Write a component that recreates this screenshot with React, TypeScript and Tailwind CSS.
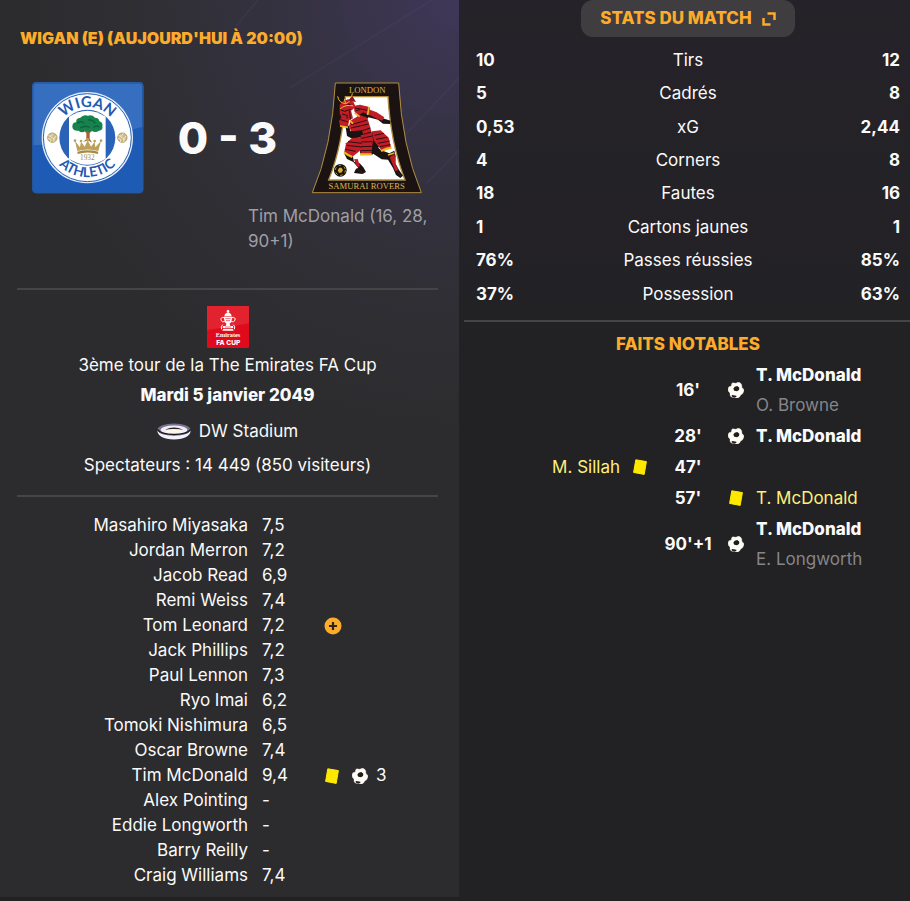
import type { ReactNode } from 'react'

type IconKind = 'card' | 'ball' | 'plus'

interface Player {
  name: string
  rating: string
  icons?: IconKind[]
  goals?: number
}

interface MatchEvent {
  minute: string
  side: 'home' | 'away'
  kind: 'goal' | 'yellow'
  player: string
  assist?: string
}

const stats = [
  { label: 'Tirs', home: '10', away: '12' },
  { label: 'Cadrés', home: '5', away: '8' },
  { label: 'xG', home: '0,53', away: '2,44' },
  { label: 'Corners', home: '4', away: '8' },
  { label: 'Fautes', home: '18', away: '16' },
  { label: 'Cartons jaunes', home: '1', away: '1' },
  { label: 'Passes réussies', home: '76%', away: '85%' },
  { label: 'Possession', home: '37%', away: '63%' },
]

const players: Player[] = [
  { name: 'Masahiro Miyasaka', rating: '7,5' },
  { name: 'Jordan Merron', rating: '7,2' },
  { name: 'Jacob Read', rating: '6,9' },
  { name: 'Remi Weiss', rating: '7,4' },
  { name: 'Tom Leonard', rating: '7,2', icons: ['plus'] },
  { name: 'Jack Phillips', rating: '7,2' },
  { name: 'Paul Lennon', rating: '7,3' },
  { name: 'Ryo Imai', rating: '6,2' },
  { name: 'Tomoki Nishimura', rating: '6,5' },
  { name: 'Oscar Browne', rating: '7,4' },
  { name: 'Tim McDonald', rating: '9,4', icons: ['card', 'ball'], goals: 3 },
  { name: 'Alex Pointing', rating: '-' },
  { name: 'Eddie Longworth', rating: '-' },
  { name: 'Barry Reilly', rating: '-' },
  { name: 'Craig Williams', rating: '7,4' },
]

const events: MatchEvent[] = [
  { minute: "16'", side: 'away', kind: 'goal', player: 'T. McDonald', assist: 'O. Browne' },
  { minute: "28'", side: 'away', kind: 'goal', player: 'T. McDonald' },
  { minute: "47'", side: 'home', kind: 'yellow', player: 'M. Sillah' },
  { minute: "57'", side: 'away', kind: 'yellow', player: 'T. McDonald' },
  { minute: "90'+1", side: 'away', kind: 'goal', player: 'T. McDonald', assist: 'E. Longworth' },
]

function YellowCard() {
  return (
    <svg viewBox="0 0 16 16" className="h-4 w-4 shrink-0">
      <path d="M3.8 0.8 L14.4 2.6 L12.2 15.4 L1.6 13.4 Z" fill="#ffe800" stroke="#ffe800" strokeWidth="1" strokeLinejoin="round" />
    </svg>
  )
}

function Ball() {
  return (
    <svg viewBox="0 0 48 48" className="h-4 w-4 shrink-0">
      <path
        d="M11 5 Q14 1 18 3 L24 4 Q29 0 33 1 Q39 3 41 8 L42 17 Q48 20 48 25 Q47 32 43 36 L38 39 Q36 45 31 47 Q25 49 20 46 L12 46 Q6 43 6 39 L6 33 Q0 29 0 23 Q0 17 3 14 L10 12 Z"
        fill="#fffdf3"
        stroke="#fffdf3"
        strokeWidth="1"
      />
      <path d="M20 14 L28 12 L34 17 L33 24 L27 28 L19 26 L16 20 Z" fill="#1d1c1f" />
      <path d="M11 39 L17 40 L25 41 L25 45 L18 46 L12 44 Z" fill="#1d1c1f" />
    </svg>
  )
}

function Plus() {
  return (
    <svg viewBox="0 0 18 18" className="h-[18px] w-[18px] shrink-0">
      <circle cx="9" cy="9" r="8.5" fill="#fcab2b" />
      <path d="M9 5 V13 M5 9 H13" stroke="#29261f" strokeWidth="2.2" />
    </svg>
  )
}

const icons: Record<IconKind, ReactNode> = {
  card: <YellowCard />,
  ball: <Ball />,
  plus: <Plus />,
}

function PanelBall({ x, y }: { x: number; y: number }) {
  return (
    <g transform={`translate(${x} ${y})`} fill="none" stroke="#b39a5c" strokeWidth="3">
      <circle r="14" fill="#cdbb8a" />
      <path d="M-12 -6 Q0 -2 2 -13 M-5 13 Q-4 0 -13 3 M12 -4 Q2 -1 5 13 M-6 -4 L6 5" stroke="#fff" strokeWidth="2" />
    </g>
  )
}

function WiganCrest() {
  return (
    <svg viewBox="36 36 336 336" className="h-28 w-28 shrink-0" role="img" aria-label="Wigan Athletic">
      <defs>
        <path id="wigan-top" d="M110 203 A92 92 0 0 1 294 203" />
        <path id="wigan-bottom" d="M84 203 A118 118 0 0 0 320 203" />
      </defs>
      <rect x="37" y="37" width="333" height="333" rx="12" fill="#1e5bb5" />
      <path d="M37 226 V49 Q37 37 49 37 H358 Q370 37 370 49 V170 Q290 190 210 207 Q120 222 37 226 Z" fill="#376fc0" />
      <rect x="39" y="39" width="329" height="329" rx="11" fill="none" stroke="#2459a5" strokeWidth="4" />
      <circle cx="202" cy="203" r="137" fill="#e8effa" />
      <circle cx="202" cy="203" r="132" fill="none" stroke="#2a62b8" strokeWidth="3" />
      <circle cx="202" cy="203" r="129" fill="#fff" />
      <circle cx="202" cy="203" r="84" fill="#2a62b8" />
      <path d="M147 140 Q202 104 257 140 V266 Q202 302 147 266 Z" fill="#fff" />
      <path
        d="M157 171 Q156 157 169 157 Q166 145 181 143 Q190 132 204 137 Q216 133 225 143 Q238 144 238 154 Q250 158 247 169 Q250 181 237 182 Q226 190 216 183 Q206 190 196 184 Q184 190 176 182 Q159 184 157 171 Z"
        fill="#16824d"
      />
      <path d="M171 160 Q184 150 193 160 M204 150 Q217 147 226 160 M181 174 Q194 165 209 172 M220 172 Q230 165 239 171" stroke="#0c6238" strokeWidth="4" fill="none" />
      <path d="M191 180 L199 190 V207 L190 216 L204 211 L216 218 L209 206 V190 L218 180 L205 186 Z" fill="#a0633a" />
      <path
        d="M165 213 L180 232 L183 215 L194 230 L203 211 L213 230 L224 215 L226 232 L243 213 L235 243 Q203 234 172 243 Z"
        fill="#bda15a"
      />
      <path d="M172 245 Q203 237 235 245 L234 252 Q203 243 173 252 Z" fill="#a98a42" />
      <g fill="#bda15a">
        <circle cx="165" cy="212" r="4" />
        <circle cx="183" cy="213" r="4" />
        <circle cx="203" cy="209" r="5" />
        <circle cx="224" cy="213" r="4" />
        <circle cx="243" cy="212" r="4" />
      </g>
      <text x="202" y="269" textAnchor="middle" fontSize="22" fill="#a98a42" fontFamily="'Liberation Serif', serif">1932</text>
      <PanelBall x={97} y={203} />
      <PanelBall x={307} y={203} />
      <g fill="#1f5ab4" fontFamily="Lato, sans-serif" fontWeight="700" textAnchor="middle">
        <text fontSize="45">
          <textPath href="#wigan-top" startOffset="50%">WIGAN</textPath>
        </text>
        <text fontSize="41">
          <textPath href="#wigan-bottom" startOffset="50%">ATHLETIC</textPath>
        </text>
      </g>
    </svg>
  )
}

function SamuraiCrest() {
  return (
    <svg viewBox="31 36 336 336" className="h-28 w-28 shrink-0" role="img" aria-label="London Samurai Rovers">
      <path d="M104 39 H294 Q304 230 362 368 H35 Q94 230 104 39 Z" fill="#1b1311" stroke="#b08d3c" strokeWidth="3" />
      <path d="M134 80 H262 Q270 220 313 330 H84 Q128 220 134 80 Z" fill="#fff" stroke="#b08d3c" strokeWidth="4" />
      <g fill="#dcb355" fontFamily="'Liberation Serif', serif" textAnchor="middle">
        <text x="200" y="68" fontSize="26">LONDON</text>
        <text x="198" y="358" fontSize="26">SAMURAI ROVERS</text>
      </g>

      {/* limbs */}
      <g fill="#1b1311">
        <path d="M188 108 L208 113 L204 132 L218 137 L246 145 L270 152 L268 162 L247 161 L232 149 L204 142 L186 160 L160 160 Z" />
        <path d="M134 165 L146 168 L149 184 L170 177 L187 170 L193 178 L189 206 L178 202 L158 208 L139 198 Z" />
        <path d="M136 245 L156 256 L160 275 L177 280 L188 292 L196 306 L185 312 L160 309 L165 298 L173 293 L158 276 L139 267 L130 250 Z" />
        <path d="M213 215 L240 240 L266 250 L281 242 L285 258 L284 280 L295 300 L307 317 L299 324 L286 315 L277 294 L262 269 L243 268 L214 249 Z" />
        <path d="M177 196 L216 186 L235 230 L215 254 L178 250 Z" />
      </g>
      <g fill="#c21d27">
        <path d="M204 118 L228 127 L251 142 L244 152 L229 146 L201 132 Z" />
        <path d="M160 268 L171 267 L178 289 L170 292 Z" />
        <path d="M267 261 L282 253 L285 283 L293 300 L284 304 Z" />
        {/* helmet and mask */}
        <path d="M117 105 L127 92 L143 88 L158 95 L164 108 L158 117 L151 122 L157 145 L145 151 L142 171 L118 167 L115 153 L122 142 L117 130 Z" />
        {/* shoulder and chest */}
        <path d="M158 108 L178 104 L206 111 L202 134 L188 127 L174 136 L162 127 Z" />
        <path d="M151 151 L178 135 L200 143 L205 160 L213 187 L192 206 L184 181 L151 184 L145 168 Z" />
        {/* skirt plates */}
        <path d="M153 205 L181 202 L186 236 L155 260 L131 246 L136 220 Z" />
        <path d="M180 196 L214 188 L217 208 L212 253 L180 252 Z" />
        <path d="M214 184 L240 181 L264 203 L272 235 L242 241 L219 211 Z" />
      </g>
      <g stroke="#2a0f10" strokeWidth="3" fill="none">
        <path d="M119 119 L132 124 L150 118 M124 132 L140 136 L139 146 M119 149 L143 156 M129 100 L150 104 M147 122 L149 149" />
        <path d="M163 114 L201 121 M165 122 L178 119" />
        <path d="M151 164 L198 151 M151 174 L204 162 M185 182 L209 174 M189 193 L211 186 M182 205 L215 198" />
        <path d="M142 215 L183 220 M138 226 L184 231 M134 238 L165 244 M182 216 L214 215 M182 230 L214 229 M180 242 L213 241" />
        <path d="M221 196 L250 190 M226 208 L260 202 M232 220 L267 213 M238 230 L269 224" />
      </g>
      {/* gold trims */}
      <g fill="none" stroke="#e8ba20" strokeWidth="5">
        <path d="M111 79 Q114 99 135 101 Q151 98 155 70 M135 101 L131 87" strokeWidth="3" />
        <path d="M118 117 Q134 102 158 108" strokeWidth="3" />
        <path d="M205 111 L201 135 M162 129 L177 140 M118 168 L142 172 M148 151 L157 161" />
        <path d="M130 247 Q141 255 155 261 M178 253 H213 M241 243 Q257 235 272 233" strokeWidth="7" />
        <path d="M262 255 L281 249" />
      </g>
      <path d="M142 92 L166 96 L155 78 Z" fill="#8d1820" />
      <path d="M167 296 L189 309 M288 302 L302 320" stroke="#4d2020" strokeWidth="2" />

      <circle cx="119" cy="301" r="19" fill="#17120c" />
      <path d="M116 293 H123 L127 301 L122 308 H115 L111 301 Z" fill="#dcb02b" />
      <circle cx="119" cy="301" r="15" fill="none" stroke="#dcb02b" strokeWidth="3" strokeDasharray="7 9" />
    </svg>
  )
}

function FaCupLogo() {
  return (
    <svg viewBox="0 0 126 126" className="h-[42px] w-[42px]" role="img" aria-label="Emirates FA Cup">
      <rect width="126" height="126" rx="4" fill="#e00a1d" />
      <path d="M0 0 H126 V52 Q60 66 0 72 Z" fill="#e3222f" />
      <g fill="#fff">
        <path d="M60 20 Q57 13 63 11 Q69 13 66 20 Z" />
        <path d="M54 24 Q63 16 72 24 L74 31 H52 Z" />
        <path d="M50 32 H76 L73 48 Q68 55 63 55 Q58 55 53 48 Z" />
        <path d="M58 54 H68 L70 60 H78 L79 66 H47 L48 60 H56 Z" />
        <path d="M49 68 H77 L80 74 H46 Z" />
      </g>
      <path d="M51 35 Q40 32 42 43 Q45 49 53 47 M75 35 Q86 32 84 43 Q81 49 73 47 M47 56 Q40 62 44 70 M79 56 Q86 62 82 70" fill="none" stroke="#fff" strokeWidth="3" />
      <path d="M55 38 H71 M57 44 H69 M54 63 H72" stroke="#e3222f" strokeWidth="2" />
      <g fill="#fff" textAnchor="middle">
        <text x="63" y="92" fontSize="19" fontWeight="700" fontFamily="'Liberation Serif', serif">Emirates</text>
        <text x="64" y="116" fontSize="20" fontWeight="800" fontFamily="Inter, sans-serif">FA CUP</text>
      </g>
    </svg>
  )
}

function StadiumIcon() {
  return (
    <svg viewBox="0 0 102 50" className="h-[17px] w-[34px] shrink-0">
      <ellipse cx="51" cy="19" rx="49" ry="18" fill="#77718f" />
      <path d="M1 22 Q3 48 51 49 Q99 48 101 22 Q92 37 51 37 Q10 37 1 22 Z" fill="#f4f1ff" />
      <ellipse cx="51" cy="20" rx="40" ry="13" fill="#f1ecf5" />
      <path d="M2 19 Q10 33 51 34 Q92 33 100 19" fill="none" stroke="#15141a" strokeWidth="4" />
      <path d="M24 20 Q51 6 78 20 Q51 15 24 20 Z" fill="#28242f" />
      <ellipse cx="51" cy="24" rx="24" ry="6" fill="#fff6e4" />
    </svg>
  )
}

function ExpandIcon() {
  return (
    <svg viewBox="0 0 14 14" className="h-[14px] w-[14px]" fill="none" stroke="#fcab2b" strokeWidth="2.5">
      <path d="M5.5 1.5 H12.5 V8 M1.5 6 V12.5 H8.5" />
    </svg>
  )
}

// Faint diagonal streaks behind the score
function Streaks() {
  return (
    <svg viewBox="0 0 459 300" className="pointer-events-none absolute top-0 right-0 w-full" aria-hidden="true">
      <g stroke="#6d6690" strokeOpacity="0.1" strokeWidth="2" fill="none">
        <path d="M432 0 L290 88" />
        <path d="M459 78 L404 136" />
        <path d="M459 150 L426 184" />
        <path d="M258 0 L236 26" />
      </g>
    </svg>
  )
}

function EventName({ event }: { event: MatchEvent }) {
  if (event.kind === 'yellow') {
    return <div className="text-[#fdf07c]">{event.player}</div>
  }
  return (
    <div>
      <div className="font-extrabold">{event.player}</div>
      {event.assist && <div className="text-[#868588]">{event.assist}</div>}
    </div>
  )
}

function EventRow({ event }: { event: MatchEvent }) {
  const home = event.side === 'home'
  const icon = event.kind === 'goal' ? <Ball /> : <YellowCard />

  return (
    <li className="grid grid-cols-[1fr_40px_56px_40px_1fr] items-center leading-[30px]">
      <div className="text-right">{home && <EventName event={event} />}</div>
      <div className="flex justify-center">{home && icon}</div>
      <div className="text-center font-bold whitespace-nowrap">{event.minute}</div>
      <div className="flex justify-center">{!home && icon}</div>
      <div>{!home && <EventName event={event} />}</div>
    </li>
  )
}

function MatchPanel() {
  return (
    <section className="relative bg-[#2c2c2e] bg-[radial-gradient(circle_at_100%_0%,#3f3758_0%,#353242_160px,#302f35_300px,#2c2c2e_440px)] pt-[26px] pr-[21px] pb-[9px] pl-[17px]">
      <Streaks />
      <h1 className="pl-[3px] text-base leading-6 font-black text-[#fcab2b]">WIGAN (E) (AUJOURD'HUI À 20:00)</h1>

      <div className="mt-8 flex items-center justify-between px-[15px]">
        <WiganCrest />
        <p className="text-[44px] leading-none font-extrabold whitespace-nowrap">0 - 3</p>
        <SamuraiCrest />
      </div>
      <div className="mt-[10px] grid grid-cols-[231fr_190fr]">
        <p className="col-start-2 leading-[25px] text-[#a09fa3]">Tim McDonald (16, 28, 90+1)</p>
      </div>

      <div className="mt-[34px] flex flex-col items-center border-y-2 border-[#454547] pt-4 pb-[15px] leading-[30px]">
        <FaCupLogo />
        <p className="mt-[2px]">3ème tour de la The Emirates FA Cup</p>
        <p className="font-extrabold">Mardi 5 janvier 2049</p>
        <p className="mt-[6px] flex items-center gap-2">
          <StadiumIcon />
          DW Stadium
        </p>
        <p className="mt-1">Spectateurs : 14 449 (850 visiteurs)</p>
      </div>

      <ul className="mt-4 leading-[25px]">
        {players.map((player) => (
          <li key={player.name} className="grid grid-cols-[231fr_190fr]">
            <span className="text-right">{player.name}</span>
            <span className="flex items-center pl-[14px]">
              <span className="w-[62px]">{player.rating}</span>
              <span className="flex items-center gap-3">
                {player.icons?.map((icon) => <span key={icon}>{icons[icon]}</span>)}
              </span>
              {player.goals && <span className="pl-2">{player.goals}</span>}
            </span>
          </li>
        ))}
      </ul>
    </section>
  )
}

function StatsPanel() {
  return (
    <section className="bg-gradient-to-b from-[#252329] to-[#222124] to-40%">
      <div className="pr-[10px] pl-[17px]">
        <div className="flex justify-center">
          <button type="button" className="flex h-[37px] items-center gap-[10px] rounded-xl bg-[#3f3d40] px-[19px] font-extrabold text-[#fcab2b]">
            STATS DU MATCH
            <ExpandIcon />
          </button>
        </div>
        <table className="mt-[7px] h-[267px] w-full table-fixed">
          <tbody>
            {stats.map((stat) => (
              <tr key={stat.label}>
                <td className="p-0 font-bold">{stat.home}</td>
                <th scope="row" className="p-0 text-center font-normal">{stat.label}</th>
                <td className="p-0 text-right font-bold">{stat.away}</td>
              </tr>
            ))}
          </tbody>
        </table>
      </div>

      <div className="mt-[9px] ml-[5px] border-t-2 border-[#454547] pt-[10px] pr-[10px] pl-3">
        <h2 className="text-center leading-6 font-extrabold text-[#fcab2b]">FAITS NOTABLES</h2>
        <ul className="mt-1 flex flex-col gap-px">
          {events.map((event) => (
            <EventRow key={event.minute} event={event} />
          ))}
        </ul>
      </div>
    </section>
  )
}

export default function App() {
  return (
    <main className="grid min-h-screen grid-cols-[459fr_451fr] bg-[#222124] pb-[5px] font-['Inter','Liberation_Sans',sans-serif] text-[17px] text-[#fafafa]">
      <MatchPanel />
      <StatsPanel />
    </main>
  )
}
